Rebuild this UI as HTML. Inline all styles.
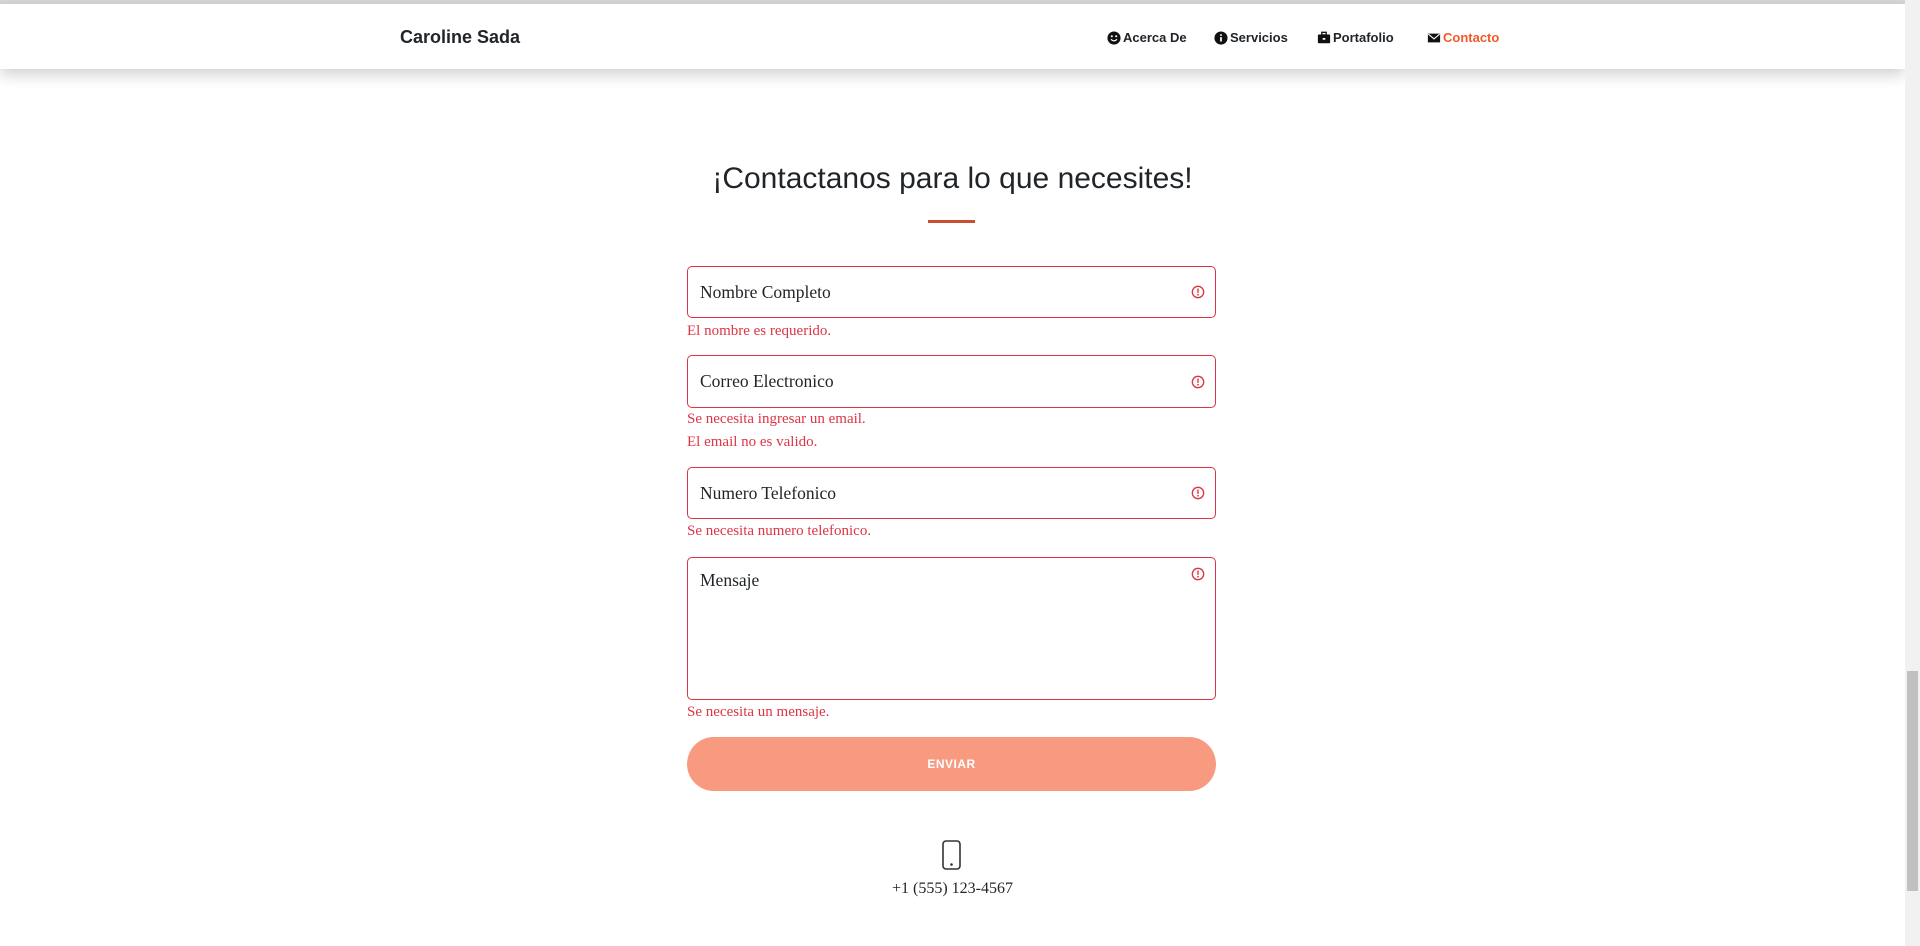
<!DOCTYPE html>
<html><head><meta charset="utf-8"><style>
*{box-sizing:border-box;margin:0;padding:0}
html,body{width:1920px;height:946px;overflow:hidden;background:#fff;font-family:"Liberation Sans",sans-serif;color:#212529}
.top{position:absolute;left:0;top:0;width:1905px;height:4px;background:#d6d6d6}
nav{position:absolute;left:0;top:4px;width:1905px;height:65px;background:#fff;box-shadow:0 6px 14px rgba(0,0,0,.18)}
.brand{position:absolute;left:400px;top:23px;font-size:18px;font-weight:bold;color:#212529}
.nl{position:absolute;top:26px;font-size:13px;font-weight:bold;color:#212529;display:flex;align-items:center;gap:2px}
.nl svg{width:14px;height:14px}
h1{position:absolute;left:0;width:1905px;text-align:center;top:162px;font-size:30px;font-weight:normal;color:#212529}
.ul{position:absolute;left:928px;top:220px;width:47px;height:3px;background:#c9502f}
.inp{position:absolute;left:687px;width:529px;border:1px solid #dc3545;border-radius:5px;font-family:"Liberation Serif",serif;font-size:17.5px;color:#212529;padding-left:12px}
.ic{position:absolute;right:10px;width:14px;height:14px}
.err{position:absolute;left:687px;font-family:"Liberation Serif",serif;font-size:15px;color:#dc3545}
.btn{position:absolute;left:687px;top:737px;width:529px;height:54px;border-radius:27px;background:#f79a80;color:#fff;font-size:12px;font-weight:bold;text-align:center;line-height:54px;letter-spacing:.5px}
.ph{position:absolute;left:0;width:1905px;text-align:center;top:880px;font-family:"Liberation Serif",serif;font-size:16px;color:#212529}
.sb{position:absolute;right:0;top:0;width:15px;height:946px;background:#f1f1f1}
.th{position:absolute;right:2px;top:671px;width:11px;height:220px;background:#c1c1c1}
</style></head><body>
<div class="top"></div>
<nav>
<div class="brand">Caroline Sada</div>
<div class="nl" style="left:1107px"><svg viewBox="0 0 16 16"><circle cx="8" cy="8" r="7.5" fill="#111"/><circle cx="5.5" cy="6" r="1.2" fill="#fff"/><circle cx="10.5" cy="6" r="1.2" fill="#fff"/><path d="M4.5 9.5q3.5 3.5 7 0" stroke="#fff" stroke-width="1.4" fill="none"/></svg>Acerca De</div>
<div class="nl" style="left:1214px"><svg viewBox="0 0 16 16"><circle cx="8" cy="8" r="7.5" fill="#111"/><rect x="7" y="7" width="2" height="5" fill="#fff"/><circle cx="8" cy="4.6" r="1.1" fill="#fff"/></svg>Servicios</div>
<div class="nl" style="left:1317px"><svg viewBox="0 0 16 16"><rect x="5.5" y="1.5" width="5" height="3" fill="none" stroke="#111" stroke-width="1.5"/><rect x="1" y="4" width="14" height="10" rx="1" fill="#111"/><rect x="6.5" y="8" width="3" height="2" fill="#fff"/></svg>Portafolio</div>
<div class="nl" style="left:1427px;color:#f05a28"><svg viewBox="0 0 16 16"><rect x="1" y="3" width="14" height="10" fill="#111"/><path d="M1.5 3.5L8 9l6.5-5.5" stroke="#fff" stroke-width="1.3" fill="none"/></svg>Contacto</div>
</nav>
<h1>¡Contactanos para lo que necesites!</h1>
<div class="ul"></div>

<div class="inp" style="top:266px;height:52px;line-height:50px">Nombre Completo<svg class="ic" style="top:18px" viewBox="0 0 16 16"><circle cx="8" cy="8" r="6.5" fill="none" stroke="#dc3545" stroke-width="1.5"/><rect x="7.2" y="4" width="1.6" height="5" fill="#dc3545"/><circle cx="8" cy="11.2" r="1" fill="#dc3545"/></svg></div>
<div class="err" style="top:323px">El nombre es requerido.</div>

<div class="inp" style="top:355px;height:53px;line-height:51px">Correo Electronico<svg class="ic" style="top:19px" viewBox="0 0 16 16"><circle cx="8" cy="8" r="6.5" fill="none" stroke="#dc3545" stroke-width="1.5"/><rect x="7.2" y="4" width="1.6" height="5" fill="#dc3545"/><circle cx="8" cy="11.2" r="1" fill="#dc3545"/></svg></div>
<div class="err" style="top:411px">Se necesita ingresar un email.</div>
<div class="err" style="top:434px">El email no es valido.</div>

<div class="inp" style="top:467px;height:52px;line-height:50px">Numero Telefonico<svg class="ic" style="top:18px" viewBox="0 0 16 16"><circle cx="8" cy="8" r="6.5" fill="none" stroke="#dc3545" stroke-width="1.5"/><rect x="7.2" y="4" width="1.6" height="5" fill="#dc3545"/><circle cx="8" cy="11.2" r="1" fill="#dc3545"/></svg></div>
<div class="err" style="top:523px">Se necesita numero telefonico.</div>

<div class="inp" style="top:557px;height:143px;padding-top:12px">Mensaje<svg class="ic" style="top:9px" viewBox="0 0 16 16"><circle cx="8" cy="8" r="6.5" fill="none" stroke="#dc3545" stroke-width="1.5"/><rect x="7.2" y="4" width="1.6" height="5" fill="#dc3545"/><circle cx="8" cy="11.2" r="1" fill="#dc3545"/></svg></div>
<div class="err" style="top:704px">Se necesita un mensaje.</div>

<div class="btn">ENVIAR</div>

<svg style="position:absolute;left:941px;top:840px" width="21" height="30" viewBox="0 0 21 30"><rect x="2" y="1" width="17" height="28" rx="3" fill="none" stroke="#333" stroke-width="1.6"/><circle cx="10.5" cy="24.5" r="1.3" fill="#333"/></svg>
<div class="ph">+1 (555) 123-4567</div>

<div class="sb"><div class="th"></div></div>
</body></html>
